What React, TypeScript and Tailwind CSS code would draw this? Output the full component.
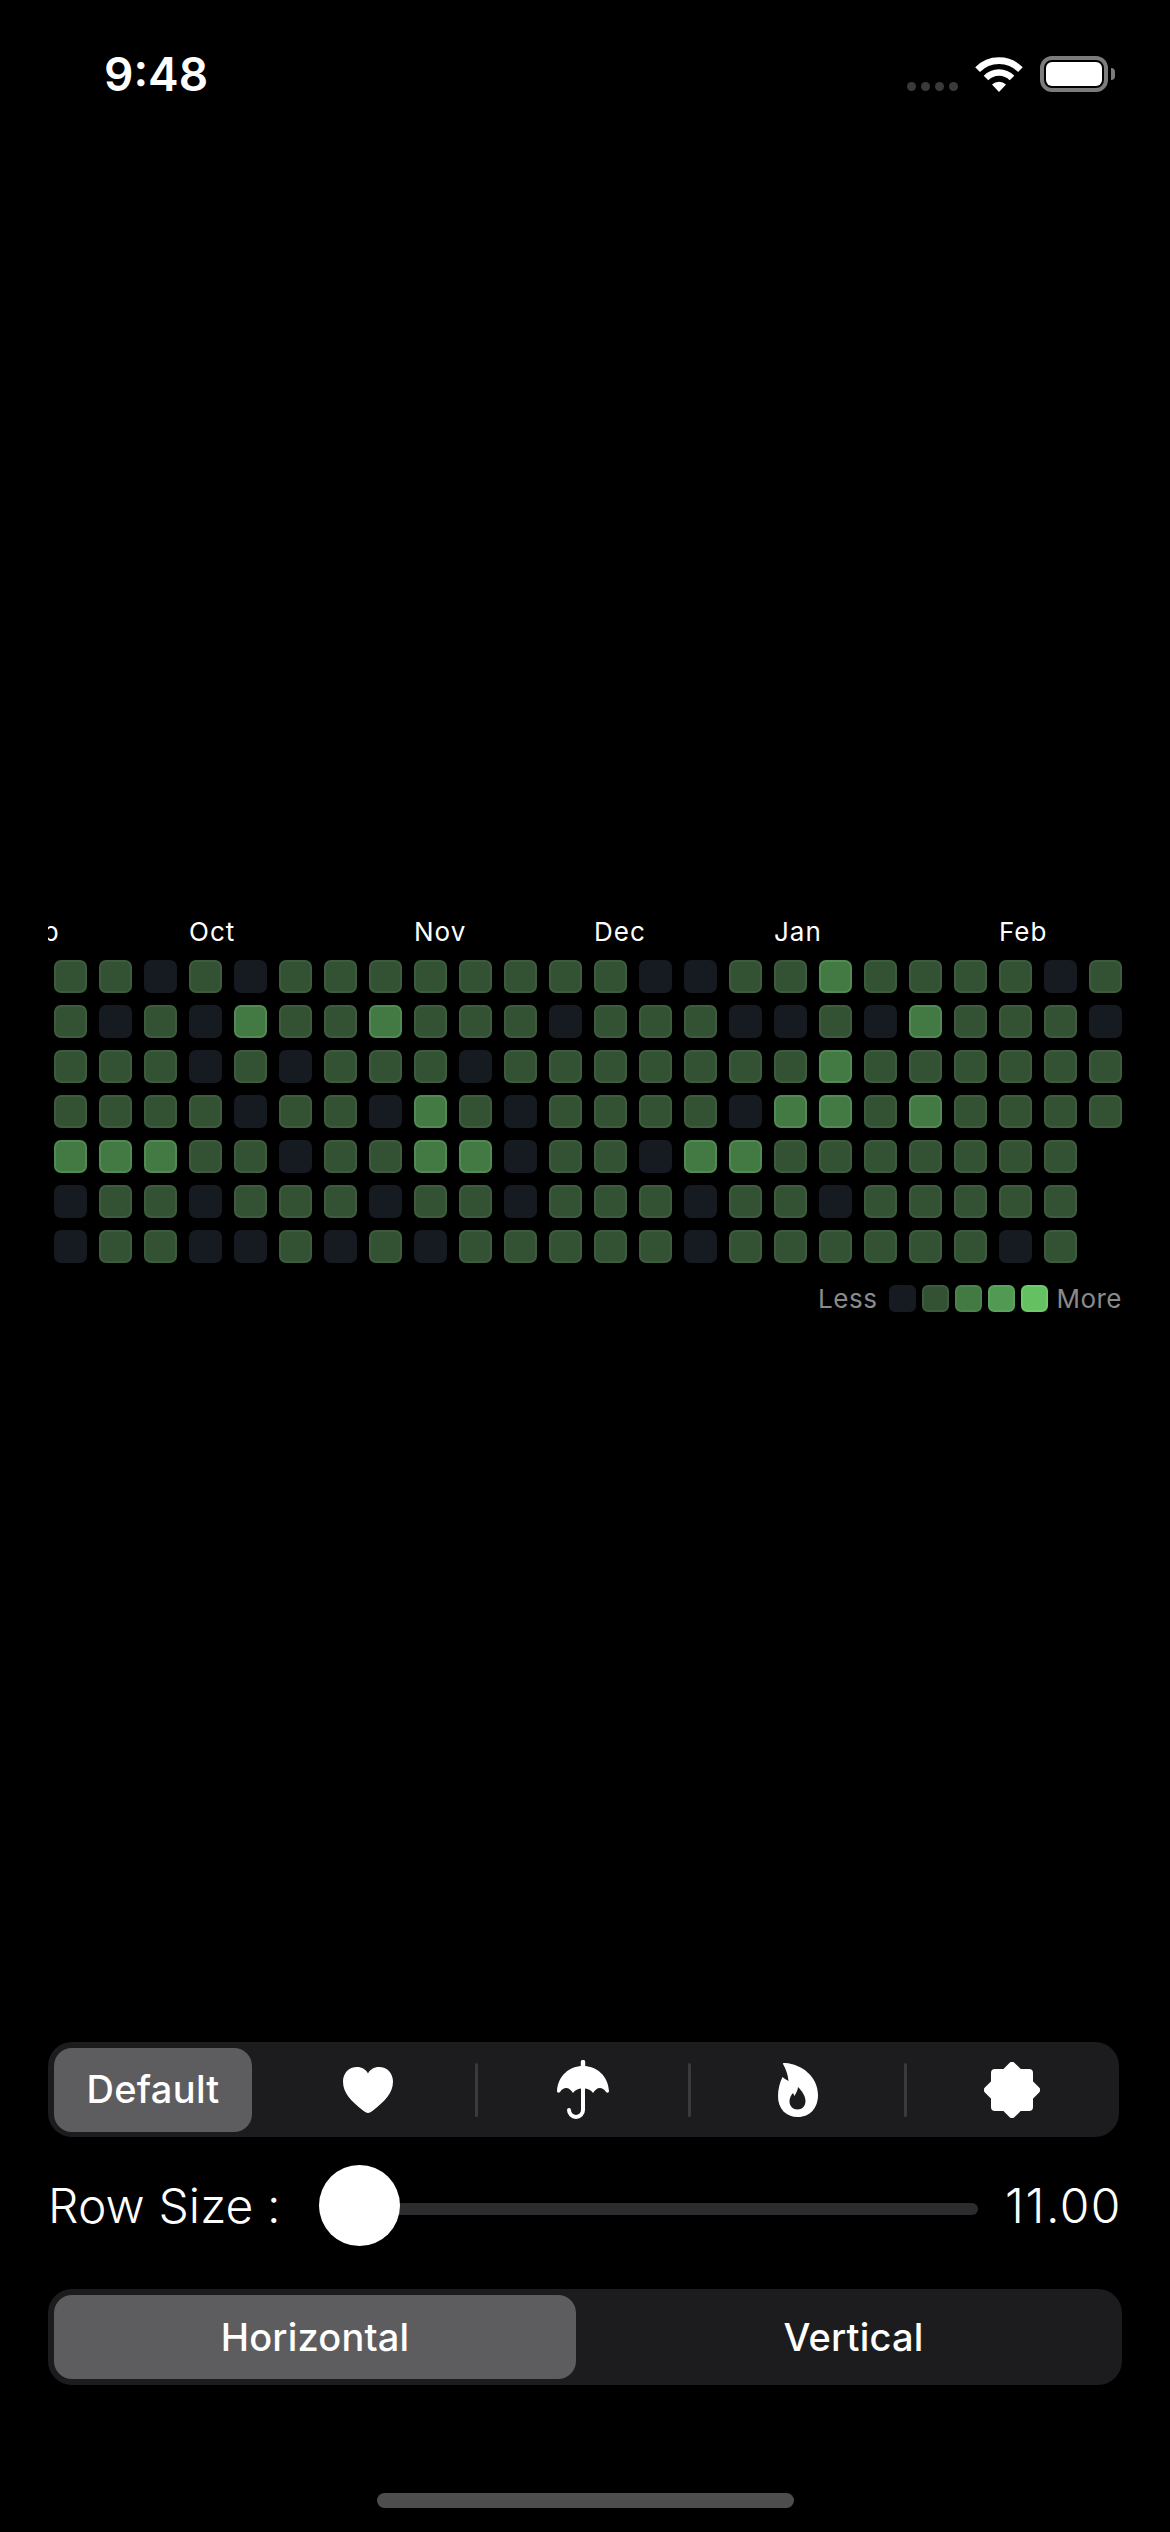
const months = [
  { name: "Sep", box: "w-[180px]" },
  { name: "Oct", box: "w-[225px]" },
  { name: "Nov", box: "w-[180px]" },
  { name: "Dec", box: "w-[180px]" },
  { name: "Jan", box: "w-[225px]" },
  { name: "Feb", box: "w-[100px]" },
];

// one string per row, one digit per week; the last week stops after four days
const rows = [
  "110101111111100112111101",
  "101021121110111001021110",
  "111010111011111112111111",
  "111101102101111022121111",
  "22211011220110221111111",
  "01101110110111011011111",
  "01100101011111011111101",
];

const cellColors: Record<string, string> = {
  "0": "bg-[#161a21]",
  "1": "bg-[#335233] border-2 border-[#3d5c3e]",
  "2": "bg-[#437a43] border-2 border-[#518a53]",
};

const legend = [
  "bg-[#161a21]",
  "bg-[#335233] border-2 border-[#3d5c3e]",
  "bg-[#437a43] border-2 border-[#4b834c]",
  "bg-[#529a54] border-2 border-[#5aa35c]",
  "bg-[#64c161] border-2 border-[#6fca6c]",
];

function StatusBar() {
  return (
    <div className="flex h-[92px] items-end pl-[104px] pr-[55px] text-white">
      <span className="text-[46px] leading-[36px] font-semibold">9:48</span>
      <div className="ml-auto flex items-end">
        <div className="mb-[1px] flex gap-[5px]">
          {[0, 1, 2, 3].map((i) => (
            <div key={i} className="h-[9px] w-[9px] rounded-full bg-[#3a3a3a]" />
          ))}
        </div>
        <svg className="ml-[17px]" width="48" height="35" viewBox="0 0 48 35" fill="none">
          <path d="M2.6 12.6a30 30 0 0 1 42.8 0" stroke="white" strokeWidth="6.6" />
          <path d="M11 21a18 18 0 0 1 26 0" stroke="white" strokeWidth="6.4" />
          <path d="M17 27.5a10 10 0 0 1 14 0L24 35z" fill="white" />
        </svg>
        <div className="ml-[17px] flex h-[36px] w-[68px] items-center rounded-[12px] border-[4px] border-[#7c7c7c] p-[2px]">
          <div className="h-full w-full rounded-[6px] bg-white" />
        </div>
        <div className="mb-[12px] ml-[3px] h-[12px] w-[4px] rounded-r-full bg-[#7c7c7c]" />
      </div>
    </div>
  );
}

function Contributions() {
  return (
    <div className="mt-[824px] pl-[48px]">
      <div className="flex h-[32px] items-center overflow-hidden text-[26px] leading-[32px] tracking-[1px] text-white">
        <div className="-ml-[39px] flex shrink-0">
          {months.map((m) => (
            <div key={m.name} className={m.box}>
              {m.name}
            </div>
          ))}
        </div>
      </div>
      <div className="mt-[12px] flex flex-col gap-[12px] pl-[6px]">
        {rows.map((row, r) => (
          <div key={r} className="flex gap-[12px]">
            {row.split("").map((level, c) => (
              <div key={c} className={`h-[33px] w-[33px] rounded-[7px] ${cellColors[level]}`} />
            ))}
          </div>
        ))}
      </div>
      <div className="mt-[22px] flex h-[27px] items-center justify-end gap-[6px] pr-[48px] text-[26px] tracking-[0.5px] text-[#8a8a8a]">
        <span className="mr-[6px]">Less</span>
        {legend.map((c, i) => (
          <div key={i} className={`h-[27px] w-[27px] rounded-[6px] ${c}`} />
        ))}
        <span className="ml-[2px]">More</span>
      </div>
    </div>
  );
}

function Heart() {
  return (
    <svg width="50" height="46" viewBox="0 0 50 46" fill="white">
      <path d="M25 46C23.5 46 22 45 20 43.5C8 34 0 26 0 14.5C0 6 6 0 14 0C19 0 23 2.5 25 6.5C27 2.5 31 0 36 0C44 0 50 6 50 14.5C50 26 42 34 30 43.5C28 45 26.5 46 25 46Z" />
    </svg>
  );
}

function Umbrella() {
  return (
    <svg width="52" height="60" viewBox="0 0 52 60" fill="none">
      <path d="M26 2V8" stroke="white" strokeWidth="4.4" strokeLinecap="round" />
      <path
        d="M26 6C12 6 1 16 0 31C0 33 2 33 3 32C5 29 7 28 9 28C12 28 14 30 16 33C18 30 21 28.5 25 28.5H27C31 28.5 34 30 36 33C38 30 40 28 43 28C45 28 47 29 49 32C50 33 52 33 52 31C51 16 40 6 26 6Z"
        fill="white"
      />
      <path d="M26 28V50a7 7 0 0 1-14 0" stroke="white" strokeWidth="4" strokeLinecap="round" />
    </svg>
  );
}

function Flame() {
  return (
    <svg width="40" height="54" viewBox="0 0 40 54" fill="white">
      <path
        fillRule="evenodd"
        d="M5 1C4.500 0 5 0 7 0C24 1 40 14 40 32C40 45 32 54 20 54C8 54 0 46 0 33C0 26 2 19 4.500 14C6 15 8 17 10.500 18C10 12 8 6 5 1ZM20 24C24 28 27.500 33 27.500 38C27.500 43 24 46.500 19.500 46.500C15 46.500 11.500 43 11.500 38.500C11.500 35 13 32 15 30L16.500 33C18 30 20 27 20 24Z"
      />
    </svg>
  );
}

function Badge() {
  return (
    <svg width="56" height="56" viewBox="0 0 56 56" fill="white">
      <rect x="7" y="7" width="42" height="42" rx="4" />
      <rect x="7" y="7" width="42" height="42" rx="4" transform="rotate(45 28 28)" />
    </svg>
  );
}

function ShapePicker() {
  return (
    <div className="ml-[48px] flex h-[95px] w-[1071px] items-center rounded-[24px] bg-[#1c1c1e] p-[6px]">
      <div className="flex h-[84px] w-[198px] shrink-0 items-center justify-center rounded-[18px] bg-[#5d5d60] text-[38px] font-medium tracking-[0.3px] text-white">
        Default
      </div>
      <div className="flex w-[223px] shrink-0 justify-center pl-[9px]">
        <Heart />
      </div>
      <div className="h-[54px] w-[3px] shrink-0 rounded-full bg-[#3a3a3c]" />
      <div className="flex w-[210px] shrink-0 justify-center">
        <Umbrella />
      </div>
      <div className="h-[54px] w-[3px] shrink-0 rounded-full bg-[#3a3a3c]" />
      <div className="flex w-[213px] shrink-0 justify-center">
        <Flame />
      </div>
      <div className="h-[54px] w-[3px] shrink-0 rounded-full bg-[#3a3a3c]" />
      <div className="flex w-[210px] shrink-0 justify-center">
        <Badge />
      </div>
    </div>
  );
}

function RowSlider() {
  return (
    <div className="mt-[28px] flex h-[81px] items-center pl-[48px] pr-[48px] text-[48px] font-light text-white">
      <span className="w-[270px] shrink-0 tracking-[0.1px]">Row Size :</span>
      <div className="relative ml-[1px] flex h-[81px] w-[659px] items-center">
        <div className="mt-[6px] h-[12px] w-full rounded-full bg-[#2c2c2e]" />
        <div className="absolute left-0 top-0 h-[81px] w-[81px] rounded-full bg-white" />
      </div>
      <span className="ml-auto tracking-[1.5px]">11.00</span>
    </div>
  );
}

function OrientationPicker() {
  return (
    <div className="ml-[48px] mt-[43px] flex h-[96px] w-[1074px] items-center rounded-[24px] bg-[#1c1c1e] p-[6px] text-[38px] font-medium tracking-[0.2px] text-white">
      <div className="flex h-[84px] w-[522px] items-center justify-center rounded-[18px] bg-[#5d5d60]">
        Horizontal
      </div>
      <div className="flex flex-1 items-center justify-center pl-[15px]">Vertical</div>
    </div>
  );
}

export default function App() {
  return (
    <div className="h-[2532px] w-[1170px] overflow-hidden bg-black font-['Inter',sans-serif]">
      <StatusBar />
      <Contributions />
      <div className="mt-[730px]">
        <ShapePicker />
        <RowSlider />
        <OrientationPicker />
      </div>
      <div className="ml-[377px] mt-[108px] h-[15px] w-[417px] rounded-full bg-[#4d4d4d]" />
    </div>
  );
}
